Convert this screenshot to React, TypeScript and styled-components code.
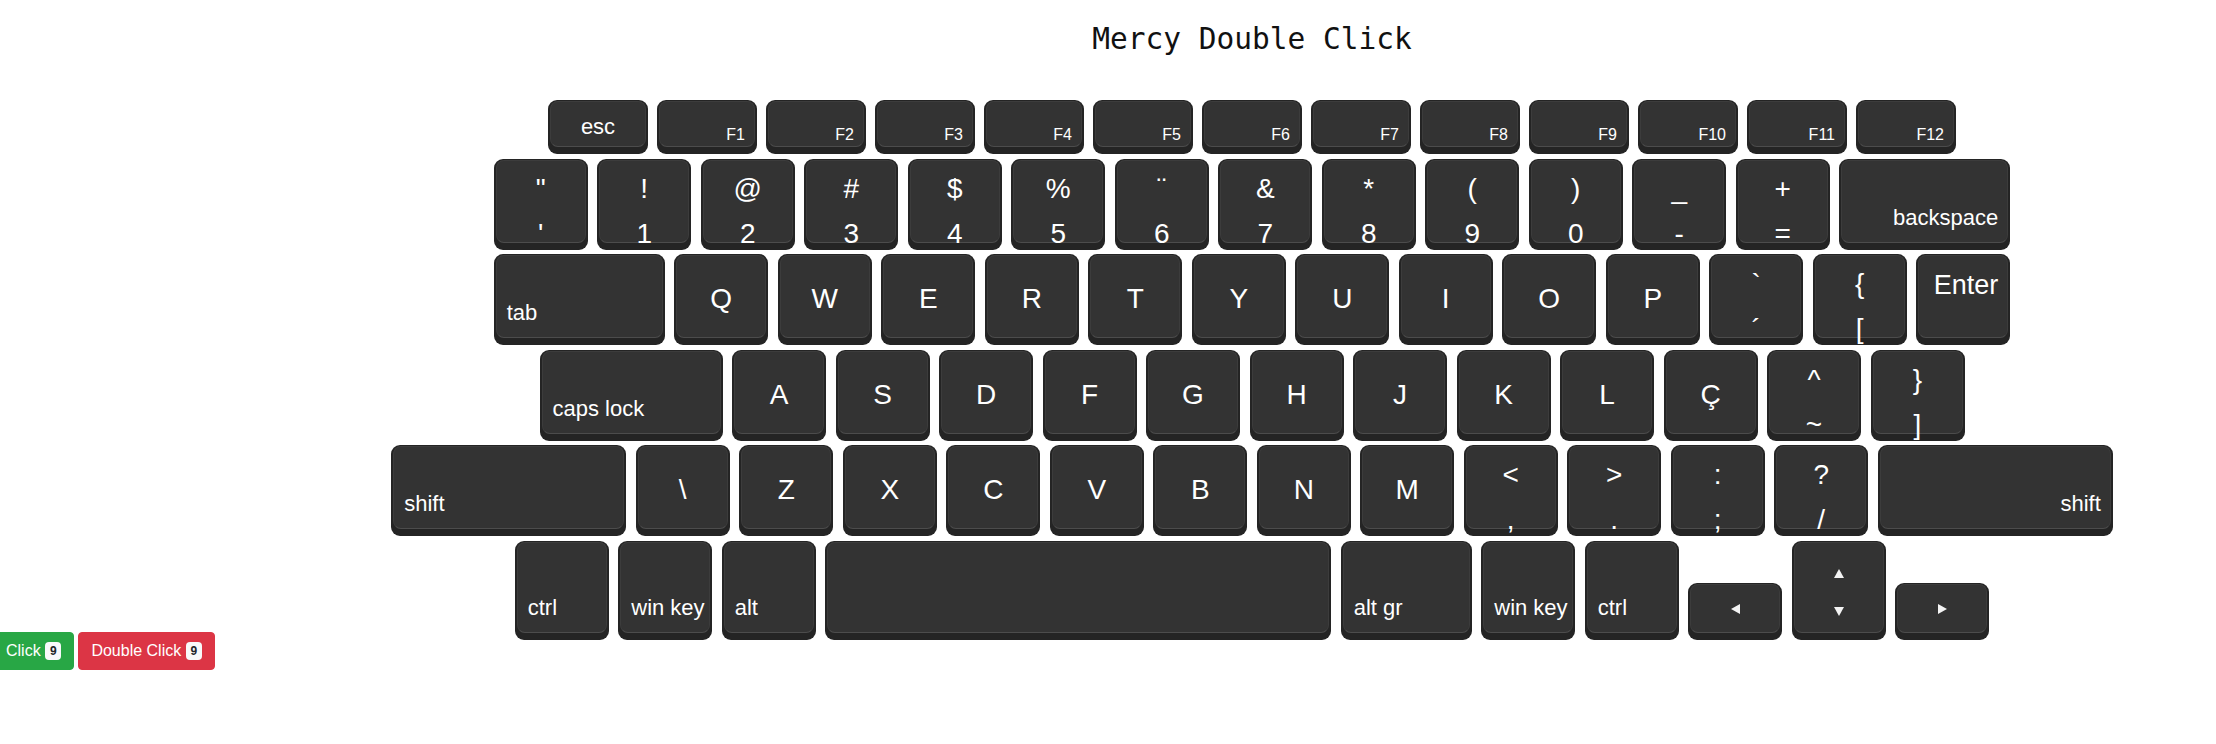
import React from "react";
import styled, { createGlobalStyle } from "styled-components";

const GlobalStyle = createGlobalStyle`
  body {
    margin: 0;
    background: #fff;
    font-family: "Liberation Sans", Arial, sans-serif;
  }
`;

type Align = "center" | "dual" | "bl" | "br" | "tr" | "fn" | "arrow";

type KeyDef = {
    w?: number;
    label?: string;
    top?: string;
    align?: Align;
    size?: number;
    arrow?: "left" | "right" | "updown";
};

const fRow: KeyDef[] = [
    { label: "esc", size: 22 },
    ...Array.from({ length: 12 }, (_, i) => ({ label: `F${i + 1}`, align: "fn" as Align, size: 16 })),
];

const dual = (top: string, label: string): KeyDef => ({ top, label, align: "dual" });
const letter = (label: string): KeyDef => ({ label });

const numRow: KeyDef[] = [
    dual('"', "'"), dual("!", "1"), dual("@", "2"), dual("#", "3"), dual("$", "4"),
    dual("%", "5"), dual("¨", "6"), dual("&", "7"), dual("*", "8"), dual("(", "9"),
    dual(")", "0"), dual("_", "-"), dual("+", "="),
    { label: "backspace", align: "br", w: 171, size: 22 },
];

const qwertyRow: KeyDef[] = [
    { label: "tab", align: "bl", w: 171, size: 22 },
    ..."QWERTYUIOP".split("").map(letter),
    dual("`", "´"), dual("{", "["),
    { label: "Enter", align: "tr", size: 27 },
];

const asdfRow: KeyDef[] = [
    { label: "caps lock", align: "bl", w: 183, size: 22 },
    ..."ASDFGHJKLÇ".split("").map(letter),
    dual("^", "~"), dual("}", "]"),
];

const shiftRow: KeyDef[] = [
    { label: "shift", align: "bl", w: 235, size: 22 },
    ..."\\ZXCVBNM".split("").map(letter),
    dual("<", ","), dual(">", "."), dual(":", ";"), dual("?", "/"),
    { label: "shift", align: "br", w: 235, size: 22 },
];

const bottomRow: KeyDef[] = [
    { label: "ctrl", align: "bl", size: 22 },
    { label: "win key", align: "bl", size: 22 },
    { label: "alt", align: "bl", size: 22 },
    { label: "", w: 506 },
    { label: "alt gr", align: "bl", w: 131, size: 22 },
    { label: "win key", align: "bl", size: 22 },
    { label: "ctrl", align: "bl", size: 22 },
    { arrow: "left", align: "arrow" },
    { arrow: "updown", align: "arrow" },
    { arrow: "right", align: "arrow" },
];

export default function App() {
    return (
        <>
            <GlobalStyle />
            <Page>
                <Title>Mercy Double Click</Title>
                <Keyboard>
                    <Row $gap={9}>
                        {fRow.map((k, i) => (
                            <KeyCap key={i} def={k} w={100} h={54} />
                        ))}
                    </Row>
                    {[numRow, qwertyRow, asdfRow, shiftRow].map((row, r) => (
                        <Row key={r} $gap={9.5}>
                            {row.map((k, i) => (
                                <KeyCap key={i} def={k} w={94} h={91} />
                            ))}
                        </Row>
                    ))}
                    <Row $gap={9.5}>
                        {bottomRow.map((k, i) => (
                            <KeyCap
                                key={i}
                                def={k}
                                w={94}
                                h={k.arrow === "left" || k.arrow === "right" ? 57 : 99}
                            />
                        ))}
                    </Row>
                </Keyboard>
            </Page>
            <ButtonBar>
                <Btn $variant="success">
                    Click <Badge>9</Badge>
                </Btn>
                <Btn $variant="danger">
                    Double Click <Badge>9</Badge>
                </Btn>
            </ButtonBar>
        </>
    );
}

function KeyCap({ def, w, h }: { def: KeyDef; w: number; h: number }) {
    const align = def.align ?? "center";
    return (
        <Key $w={def.w ?? w} $h={h}>
            <Face $align={align} $size={def.size ?? 28}>
                {align === "dual" && (
                    <>
                        <span>{def.top}</span>
                        <Lower>{def.label}</Lower>
                    </>
                )}
                {align === "arrow" && def.arrow === "updown" && (
                    <UpDown>
                        <Triangle dir="up" />
                        <Triangle dir="down" />
                    </UpDown>
                )}
                {align === "arrow" && def.arrow !== "updown" && <Triangle dir={def.arrow!} />}
                {align !== "dual" && align !== "arrow" && def.label}
            </Face>
        </Key>
    );
}

function Triangle({ dir }: { dir: string }) {
    const points: Record<string, string> = {
        up: "0,9 5,0 10,9",
        down: "0,0 10,0 5,9",
        left: "9,0 9,10 0,5",
        right: "0,0 0,10 9,5",
    };
    const horizontal = dir === "left" || dir === "right";
    return (
        <svg width={horizontal ? 9 : 10} height={horizontal ? 10 : 9} viewBox={horizontal ? "0 0 9 10" : "0 0 10 9"}>
            <polygon points={points[dir]} fill="#f4f4f4" />
        </svg>
    );
}

const Page = styled.div`
    padding-left: 288px;
`;

const Title = styled.h1`
    margin: 0;
    padding-top: 21px;
    font-family: "DejaVu Sans Mono", "Liberation Mono", monospace;
    font-weight: normal;
    font-size: 29.5px;
    line-height: 36px;
    color: #111;
    text-align: center;
`;

const Keyboard = styled.div`
    margin-top: 43px;
    height: 532px;
    display: flex;
    flex-direction: column;
    align-items: center;
    gap: 4.5px;
`;

const Row = styled.div<{ $gap: number }>`
    display: flex;
    align-items: flex-end;
    gap: ${(p) => p.$gap}px;
`;

const Key = styled.div<{ $w: number; $h: number }>`
    flex: none;
    box-sizing: border-box;
    width: ${(p) => p.$w}px;
    height: ${(p) => p.$h}px;
    padding: 1px 2px 7px;
    background: #242424;
    border-radius: 9px;
`;

const faceLayout: Record<Align, string> = {
    center: "align-items: center; justify-content: center; padding-top: 5px;",
    dual: "flex-direction: column; align-items: center; justify-content: space-between; padding-top: 14px;",
    bl: "align-items: flex-end; justify-content: flex-start; padding: 0 10px 13px;",
    br: "align-items: flex-end; justify-content: flex-end; padding: 0 9px 13px;",
    tr: "align-items: flex-start; justify-content: flex-end; padding: 16px 9px 0;",
    fn: "align-items: flex-end; justify-content: flex-end; padding: 0 9px 3px;",
    arrow: "align-items: center; justify-content: center; padding-top: 2px;",
};

const Face = styled.div<{ $align: Align; $size: number }>`
    box-sizing: border-box;
    height: 100%;
    display: flex;
    ${(p) => faceLayout[p.$align]}
    background: #333;
    border: 1px solid #3c3c3c;
    border-bottom-color: #4c4c4c;
    border-radius: 8px;
    color: #fff;
    font-size: ${(p) => p.$size}px;
    line-height: 1;
    white-space: nowrap;
`;

const Lower = styled.span`
    margin-bottom: -6px;
`;

const UpDown = styled.div`
    height: 100%;
    display: flex;
    flex-direction: column;
    justify-content: space-between;
    padding: 24px 0 16px;
    box-sizing: border-box;
`;

const ButtonBar = styled.div`
    display: flex;
    gap: 4px;
    margin-left: -7px;
`;

const Btn = styled.button<{ $variant: "success" | "danger" }>`
    display: inline-block;
    padding: 6px 12px;
    font-family: "Liberation Sans", Arial, sans-serif;
    font-size: 16px;
    line-height: 24px;
    color: #fff;
    background: ${(p) => (p.$variant === "success" ? "#28a745" : "#dc3545")};
    border: 1px solid ${(p) => (p.$variant === "success" ? "#28a745" : "#dc3545")};
    border-radius: 4px;
    cursor: pointer;
`;

const Badge = styled.span`
    display: inline-block;
    padding: 3px 4.8px;
    font-size: 12px;
    font-weight: 700;
    line-height: 1;
    color: #212529;
    background: #f8f9fa;
    border-radius: 4px;
    vertical-align: 1px;
`;
